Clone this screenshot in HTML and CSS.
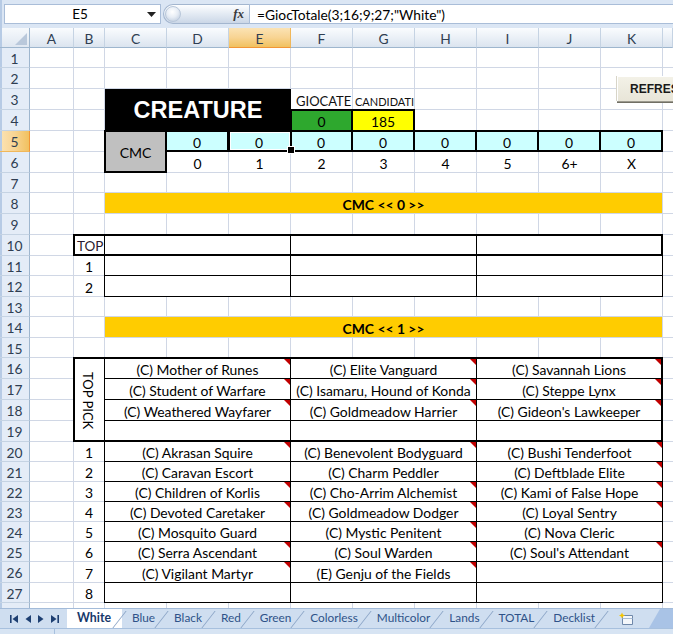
FILE: index.html
```html
<!DOCTYPE html>
<html lang="it">
<head>
<meta charset="utf-8">
<title>CREATURE - White</title>
<link rel="stylesheet" href="styles.css">
</head>
<body>
<div class="app">
  <div class="formula-bar">
    <div class="namebox">
      <span class="name">E5</span>
      <svg class="dd" width="9" height="5" viewBox="0 0 9 5"><path d="M0 0H9L4.5 5Z" fill="#222"/></svg>
    </div>
    <div class="fx-pill"><span class="knob"></span><span class="fx">fx</span></div>
    <div class="formula">=GiocTotale(3;16;9;27;"White")</div>
  </div>

  <div class="sheet">
    <div class="corner"><svg width="12" height="12" viewBox="0 0 12 12"><path d="M12 0V12H0Z" fill="#b9c8db"/></svg></div>
    <div class="ch colA">A</div>
    <div class="ch colB">B</div>
    <div class="ch colC">C</div>
    <div class="ch colD">D</div>
    <div class="ch colE sel">E</div>
    <div class="ch colF">F</div>
    <div class="ch colG">G</div>
    <div class="ch colH">H</div>
    <div class="ch colI">I</div>
    <div class="ch colJ">J</div>
    <div class="ch colK">K</div>
    <div class="ch colL"></div>

    <div class="rh row1">1</div>
    <div class="rh row2">2</div>
    <div class="rh row3">3</div>
    <div class="rh row4">4</div>
    <div class="rh row5 sel">5</div>
    <div class="rh row6">6</div>
    <div class="rh row7">7</div>
    <div class="rh row8">8</div>
    <div class="rh row9">9</div>
    <div class="rh row10">10</div>
    <div class="rh row11">11</div>
    <div class="rh row12">12</div>
    <div class="rh row13">13</div>
    <div class="rh row14">14</div>
    <div class="rh row15">15</div>
    <div class="rh row16">16</div>
    <div class="rh row17">17</div>
    <div class="rh row18">18</div>
    <div class="rh row19">19</div>
    <div class="rh row20">20</div>
    <div class="rh row21">21</div>
    <div class="rh row22">22</div>
    <div class="rh row23">23</div>
    <div class="rh row24">24</div>
    <div class="rh row25">25</div>
    <div class="rh row26">26</div>
    <div class="rh row27">27</div>
    <div class="rh row28">28</div>

    <div class="vline colA"></div>
    <div class="vline colB"></div>
    <div class="vline colC"></div>
    <div class="vline colD"></div>
    <div class="vline colE"></div>
    <div class="vline colF"></div>
    <div class="vline colG"></div>
    <div class="vline colH"></div>
    <div class="vline colI"></div>
    <div class="vline colJ"></div>
    <div class="vline colK"></div>

    <div class="hline row1"></div>
    <div class="hline row2"></div>
    <div class="hline row3"></div>
    <div class="hline row4"></div>
    <div class="hline row5"></div>
    <div class="hline row6"></div>
    <div class="hline row7"></div>
    <div class="hline row8"></div>
    <div class="hline row9"></div>
    <div class="hline row10"></div>
    <div class="hline row11"></div>
    <div class="hline row12"></div>
    <div class="hline row13"></div>
    <div class="hline row14"></div>
    <div class="hline row15"></div>
    <div class="hline row16"></div>
    <div class="hline row17"></div>
    <div class="hline row18"></div>
    <div class="hline row19"></div>
    <div class="hline row20"></div>
    <div class="hline row21"></div>
    <div class="hline row22"></div>
    <div class="hline row23"></div>
    <div class="hline row24"></div>
    <div class="hline row25"></div>
    <div class="hline row26"></div>
    <div class="hline row27"></div>
    <div class="hline row28"></div>

    <!-- header block -->
    <div class="cell creature colC row3 span3 rspan2">CREATURE</div>
    <div class="cell plain left label colF row3">GIOCATE</div>
    <div class="cell plain left label small colG row3">CANDIDATI</div>
    <div class="cell green colF row4 bt2 bl2 br2">0</div>
    <div class="cell yellow colG row4 bt2 br2">185</div>

    <div class="cell gray colC row5 rspan2 bl2 bt2 bb2 br2">CMC</div>
    <div class="cell cyan colD row5 bt2 bb2 br2">0</div>
    <div class="cell cyan colE row5 bt2 bb2 br2">0</div>
    <div class="cell cyan colF row5 bt2 bb2 br2">0</div>
    <div class="cell cyan colG row5 bt2 bb2 br2">0</div>
    <div class="cell cyan colH row5 bt2 bb2 br2">0</div>
    <div class="cell cyan colI row5 bt2 bb2 br2">0</div>
    <div class="cell cyan colJ row5 bt2 bb2 br2">0</div>
    <div class="cell cyan colK row5 bt2 bb2 br2">0</div>
    <div class="selection colE row5"></div>

    <div class="cell plain colD row6">0</div>
    <div class="cell plain colE row6">1</div>
    <div class="cell plain colF row6">2</div>
    <div class="cell plain colG row6">3</div>
    <div class="cell plain colH row6">4</div>
    <div class="cell plain colI row6">5</div>
    <div class="cell plain colJ row6">6+</div>
    <div class="cell plain colK row6">X</div>

    <!-- CMC 0 -->
    <div class="cell band colC row8 span9">CMC &lt;&lt; 0 &gt;&gt;</div>

    <div class="cell left top-label colB row10 bl2 bt2 bb2 br1">TOP</div>
    <div class="cell colC row10 span3 bt2 bb2 br1"></div>
    <div class="cell colF row10 span3 bt2 bb2 br1"></div>
    <div class="cell colI row10 span3 bt2 bb2 br2"></div>

    <div class="cell plain colB row11">1</div>
    <div class="cell colC row11 span3 bl1 br1 bb1"></div>
    <div class="cell colF row11 span3 br1 bb1"></div>
    <div class="cell colI row11 span3 br1 bb1"></div>

    <div class="cell plain colB row12">2</div>
    <div class="cell colC row12 span3 bl1 br1 bb1"></div>
    <div class="cell colF row12 span3 br1 bb1"></div>
    <div class="cell colI row12 span3 br1 bb1"></div>

    <!-- CMC 1 -->
    <div class="cell band colC row14 span9">CMC &lt;&lt; 1 &gt;&gt;</div>

    <div class="cell toppick colB row16 rspan4 bl2 bt2 bb2 br1"><span>TOP PICK</span></div>

    <div class="cell note colC row16 span3 bt2 br1 bb1">(C) Mother of Runes</div>
    <div class="cell note colF row16 span3 bt2 br1 bb1">(C) Elite Vanguard</div>
    <div class="cell note colI row16 span3 bt2 br2 bb1">(C) Savannah Lions</div>

    <div class="cell note colC row17 span3 br1 bb1">(C) Student of Warfare</div>
    <div class="cell note colF row17 span3 br1 bb1">(C) Isamaru, Hound of Konda</div>
    <div class="cell note colI row17 span3 br2 bb1">(C) Steppe Lynx</div>

    <div class="cell note colC row18 span3 br1 bb1">(C) Weathered Wayfarer</div>
    <div class="cell note colF row18 span3 br1 bb1">(C) Goldmeadow Harrier</div>
    <div class="cell note colI row18 span3 br2 bb1">(C) Gideon's Lawkeeper</div>

    <div class="cell colC row19 span3 br1 bb2"></div>
    <div class="cell colF row19 span3 br1 bb2"></div>
    <div class="cell colI row19 span3 br2 bb2"></div>

    <div class="cell plain colB row20">1</div>
    <div class="cell note colC row20 span3 bl1 br1 bb1">(C) Akrasan Squire</div>
    <div class="cell note colF row20 span3 br1 bb1">(C) Benevolent Bodyguard</div>
    <div class="cell note colI row20 span3 br1 bb1">(C) Bushi Tenderfoot</div>

    <div class="cell plain colB row21">2</div>
    <div class="cell colC row21 span3 bl1 br1 bb1">(C) Caravan Escort</div>
    <div class="cell colF row21 span3 br1 bb1">(C) Charm Peddler</div>
    <div class="cell note colI row21 span3 br1 bb1">(C) Deftblade Elite</div>

    <div class="cell plain colB row22">3</div>
    <div class="cell note colC row22 span3 bl1 br1 bb1">(C) Children of Korlis</div>
    <div class="cell note colF row22 span3 br1 bb1">(C) Cho-Arrim Alchemist</div>
    <div class="cell note colI row22 span3 br1 bb1">(C) Kami of False Hope</div>

    <div class="cell plain colB row23">4</div>
    <div class="cell note colC row23 span3 bl1 br1 bb1">(C) Devoted Caretaker</div>
    <div class="cell note colF row23 span3 br1 bb1">(C) Goldmeadow Dodger</div>
    <div class="cell note colI row23 span3 br1 bb1">(C) Loyal Sentry</div>

    <div class="cell plain colB row24">5</div>
    <div class="cell colC row24 span3 bl1 br1 bb1">(C) Mosquito Guard</div>
    <div class="cell note colF row24 span3 br1 bb1">(C) Mystic Penitent</div>
    <div class="cell colI row24 span3 br1 bb1">(C) Nova Cleric</div>

    <div class="cell plain colB row25">6</div>
    <div class="cell note colC row25 span3 bl1 br1 bb1">(C) Serra Ascendant</div>
    <div class="cell note colF row25 span3 br1 bb1">(C) Soul Warden</div>
    <div class="cell note colI row25 span3 br1 bb1">(C) Soul's Attendant</div>

    <div class="cell plain colB row26">7</div>
    <div class="cell note colC row26 span3 bl1 br1 bb1">(C) Vigilant Martyr</div>
    <div class="cell note colF row26 span3 br1 bb1">(E) Genju of the Fields</div>
    <div class="cell colI row26 span3 br1 bb1"></div>

    <div class="cell plain colB row27">8</div>
    <div class="cell colC row27 span3 bl1 br1 bb1"></div>
    <div class="cell colF row27 span3 br1 bb1"></div>
    <div class="cell colI row27 span3 br1 bb1"></div>

    <button class="refresh">REFRESH</button>
  </div>

  <div class="tabbar">
    <div class="nav">
      <svg width="8" height="8" viewBox="0 0 8 8"><path d="M0 0H1.6V8H0Z M8 0V8L2.5 4Z" fill="#1d3f72"/></svg>
      <svg width="6" height="8" viewBox="0 0 6 8"><path d="M6 0V8L0.5 4Z" fill="#1d3f72"/></svg>
      <svg width="6" height="8" viewBox="0 0 6 8"><path d="M0 0V8L5.5 4Z" fill="#1d3f72"/></svg>
      <svg width="8" height="8" viewBox="0 0 8 8"><path d="M0 0V8L5.5 4Z M6.4 0H8V8H6.4Z" fill="#1d3f72"/></svg>
    </div>
    <div class="tabs">
      <div class="tab active">White</div>
      <div class="tab">Blue</div>
      <div class="tab">Black</div>
      <div class="tab">Red</div>
      <div class="tab">Green</div>
      <div class="tab">Colorless</div>
      <div class="tab">Multicolor</div>
      <div class="tab">Lands</div>
      <div class="tab">TOTAL</div>
      <div class="tab">Decklist</div>
      <div class="tab new">
        <svg width="17" height="14" viewBox="0 0 17 14">
          <path d="M4.5 3.5H14.5V12.5H4.5Z" fill="#f4f7fb" stroke="#6f88aa"/>
          <path d="M4.5 6.5H14.5" stroke="#a9bcd6"/>
          <path d="M4 0.5L4.9 2.6L7 3.5L4.9 4.4L4 6.5L3.1 4.4L1 3.5L3.1 2.6Z" fill="#f5c400"/>
        </svg>
      </div>
    </div>
    <div class="tab-fill"></div>
  </div>
  <div class="statusbar"><div class="status-cell"></div></div>
</div>
</body>
</html>
```

FILE: styles.css
```css
* { box-sizing: border-box; }
html, body { margin: 0; padding: 0; }
body {
  width: 673px;
  height: 634px;
  overflow: hidden;
  background: #fff;
  font-family: Lato, "Liberation Sans", sans-serif;
  color: #000;
}
.app {
  width: 673px;
  height: 634px;
  display: flex;
  flex-direction: column;
  overflow: hidden;
}

/* ---------- formula bar ---------- */
.formula-bar {
  height: 28px;
  flex: none;
  display: flex;
  align-items: flex-start;
  padding: 4px 0 0 4px;
  background: #dbe6f4;
  box-shadow: inset 2px 0 #b7cbe5;
}
.namebox {
  width: 157px;
  height: 20px;
  background: #fff;
  border: 1px solid #a9bdd8;
  display: flex;
  align-items: center;
}
.namebox .name {
  flex: 1;
  text-align: center;
  font-size: 13.5px;
  padding-left: 8px;
}
.namebox .dd { margin-right: 4px; }
.fx-pill {
  margin-left: 2px;
  width: 86px;
  height: 20px;
  border-radius: 10px 0 0 10px;
  background: linear-gradient(#fdfeff, #e3eaf3 50%, #cbd7e7);
  border: 1px solid #a3b6cf;
  border-right: none;
  display: flex;
  align-items: center;
  justify-content: space-between;
}
.knob {
  width: 16px;
  height: 16px;
  margin-left: 1px;
  border-radius: 50%;
  background: radial-gradient(circle at 45% 35%, #ffffff 0, #e7edf5 45%, #b5c4d8 100%);
  border: 1px solid #b8c7da;
}
.fx {
  font-family: "Liberation Serif", serif;
  font-style: italic;
  font-weight: bold;
  font-size: 13px;
  color: #3a3a3a;
  margin-right: 5px;
}
.formula {
  flex: 1;
  height: 20px;
  background: #fff;
  border: 1px solid #a9bdd8;
  border-right: none;
  padding-left: 7px;
  display: flex;
  align-items: center;
  font-size: 13.8px;
}

/* ---------- sheet grid ---------- */
.sheet {
  position: relative;
  height: 580px;
  flex: none;
  overflow: hidden;
  display: grid;
  grid-template-columns: 30px 44px 31px 62px repeat(8, 62px) 10px;
  grid-template-rows:
    20px
    20px 21px 21px 21px 21px 21px 20px 21px 21px
    21px 20px 21px 20px 21px 20px
    21px 21px 21px 21px
    20px 20px 20px 20px 20px 20px 21px
    20px 20px;
}

.colA { grid-column-start: 2; }
.colB { grid-column-start: 3; }
.colC { grid-column-start: 4; }
.colD { grid-column-start: 5; }
.colE { grid-column-start: 6; }
.colF { grid-column-start: 7; }
.colG { grid-column-start: 8; }
.colH { grid-column-start: 9; }
.colI { grid-column-start: 10; }
.colJ { grid-column-start: 11; }
.colK { grid-column-start: 12; }
.colL { grid-column-start: 13; }

.row1 { grid-row-start: 2; }
.row2 { grid-row-start: 3; }
.row3 { grid-row-start: 4; }
.row4 { grid-row-start: 5; }
.row5 { grid-row-start: 6; }
.row6 { grid-row-start: 7; }
.row7 { grid-row-start: 8; }
.row8 { grid-row-start: 9; }
.row9 { grid-row-start: 10; }
.row10 { grid-row-start: 11; }
.row11 { grid-row-start: 12; }
.row12 { grid-row-start: 13; }
.row13 { grid-row-start: 14; }
.row14 { grid-row-start: 15; }
.row15 { grid-row-start: 16; }
.row16 { grid-row-start: 17; }
.row17 { grid-row-start: 18; }
.row18 { grid-row-start: 19; }
.row19 { grid-row-start: 20; }
.row20 { grid-row-start: 21; }
.row21 { grid-row-start: 22; }
.row22 { grid-row-start: 23; }
.row23 { grid-row-start: 24; }
.row24 { grid-row-start: 25; }
.row25 { grid-row-start: 26; }
.row26 { grid-row-start: 27; }
.row27 { grid-row-start: 28; }
.row28 { grid-row-start: 29; }

.span3 { grid-column-end: span 3; }
.span9 { grid-column-end: span 9; }
.rspan2 { grid-row-end: span 2; }
.rspan4 { grid-row-end: span 4; }

/* headers */
.corner {
  grid-row: 1;
  grid-column: 1;
  background: linear-gradient(#f6f9fc, #dfe7f1);
  border-right: 1px solid #9eb6ce;
  border-bottom: 1px solid #9eb6ce;
  display: flex;
  align-items: flex-end;
  justify-content: flex-end;
  padding: 0 2px 2px 0;
  box-shadow: inset 2px 0 #b7cbe5;
}
.ch {
  grid-row: 1;
  background: linear-gradient(#fafcfe, #e9eff6 55%, #dbe4ef);
  border-right: 1px solid #c5d3e3;
  border-bottom: 1px solid #9eb6ce;
  display: flex;
  align-items: center;
  justify-content: center;
  font-size: 13.8px;
  color: #2f3e52;
  padding-top: 1px;
}
.ch.sel {
  background: linear-gradient(#fbe3b4, #f8d493 50%, #f1c15f);
  border-bottom-color: #f29536;
  border-right-color: #f0b75a;
}
.rh {
  grid-column: 1;
  background: #e4ecf7;
  border-right: 1px solid #9eb6ce;
  border-bottom: 1px solid #c5d3e3;
  box-shadow: inset 2px 0 #b7cbe5;
  display: flex;
  align-items: center;
  justify-content: center;
  font-size: 13.8px;
  color: #2f3e52;
  padding-top: 1px;
}
.rh.sel {
  background: linear-gradient(90deg, #fbe3b4, #f8d493 50%, #f1c15f);
  border-bottom-color: #f0b75a;
  border-right-color: #f29536;
}

/* gridlines */
.vline {
  grid-row: 2 / -1;
  border-right: 1px solid #d0d7e5;
}
.hline {
  grid-column: 2 / -1;
  border-bottom: 1px solid #d0d7e5;
}

/* cells */
.cell {
  position: relative;
  margin: 0 1px 1px 0;
  background: #fff;
  display: flex;
  align-items: center;
  justify-content: center;
  white-space: nowrap;
  overflow: hidden;
  font-size: 13.9px;
  padding-top: 2px;
}
.plain { background: transparent; }
.left { justify-content: flex-start; padding-left: 4px; }

.bl1 { border-left: 1px solid #000; margin-left: -1px; }
.bl2 { border-left: 2px solid #000; margin-left: -1px; }
.bt1 { border-top: 1px solid #000; margin-top: -1px; }
.bt2 { border-top: 2px solid #000; margin-top: -1px; }
.br1 { border-right: 1px solid #000; margin-right: 0; }
.br2 { border-right: 2px solid #000; margin-right: 0; }
.bb1 { border-bottom: 1px solid #000; margin-bottom: 0; }
.bb2 { border-bottom: 2px solid #000; margin-bottom: 0; }

.creature {
  margin: 0;
  background: #000;
  color: #fff;
  font-family: "Liberation Sans", Arial, sans-serif;
  font-weight: bold;
  font-size: 23.5px;
  padding-top: 0;
}
.label { font-size: 13px; padding-left: 5px; padding-top: 4px; color: #111; }
.label.small { font-size: 11px; padding-left: 2px; overflow: visible; }
.green { background: #2ea82e; }
.yellow { background: #ffff00; }
.gray { background: #c0c0c0; font-size: 14px; }
.cyan { background: #ccffff; }
.band { background: #ffcc00; font-weight: bold; }
.top-label { font-size: 13.5px; padding-left: 2px; color: #2a1a2e; }
.toppick span {
  writing-mode: vertical-rl;
  font-size: 13px;
  margin-right: 3px;
}

.note::after {
  content: "";
  position: absolute;
  top: 0;
  right: 0;
  border-style: solid;
  border-width: 0 6px 6px 0;
  border-color: transparent #c00000 transparent transparent;
}

.selection {
  margin: -1px -1px 0 -1px;
  border: 2px solid #000;
  box-shadow: inset 0 0 0 1px #fff;
  position: relative;
}
.selection::after {
  content: "";
  position: absolute;
  right: -5px;
  bottom: -4px;
  width: 6px;
  height: 6px;
  background: #000;
  border: 1px solid #fff;
}

.refresh {
  position: absolute;
  left: 617px;
  top: 48px;
  width: 72px;
  height: 25px;
  padding: 0 0 0 12px;
  margin: 0;
  text-align: left;
  background: linear-gradient(#f3f1e7, #e8e5d8);
  border: none;
  border-top: 1px solid #fff;
  border-left: 1px solid #fff;
  box-shadow: 0 1px 0 #9c9a8f, 0 2px 0 #716f64, -1px 0 0 #d8d5c8;
  font-family: "Liberation Sans", Arial, sans-serif;
  font-weight: bold;
  font-size: 12px;
  color: #1a1a1a;
  white-space: nowrap;
  overflow: hidden;
}

/* ---------- sheet tabs ---------- */
.tabbar {
  height: 20px;
  flex: none;
  display: flex;
  align-items: stretch;
  background: #cfdef0;
  border-top: 1px solid #a3bbd9;
}
.nav {
  width: 67px;
  flex: none;
  display: flex;
  align-items: center;
  gap: 7px;
  padding-left: 10px;
}
.tabs { display: flex; }
.tab {
  position: relative;
  display: flex;
  align-items: center;
  padding: 0 9px 2px 10px;
  font-size: 11.8px;
  color: #2e5288;
}
.tab.active {
  background: #fff;
  font-weight: bold;
  color: #17396b;
  padding: 0 11px 2px 10px;
  font-size: 12.3px;
}
.tab + .tab::before {
  content: "";
  position: absolute;
  left: -3px;
  top: 2px;
  bottom: 0;
  width: 1px;
  background: #8aa4c6;
  transform: skewX(-38deg);
}
.tab.new { padding: 0 6px 0 14px; }
.tab-fill {
  flex: 1;
  margin: 0 0 0 8px;
  background: #a9c3e6;
  transform: skewX(-30deg);
  transform-origin: bottom left;
}
.statusbar {
  flex: 1;
  background: #d7e4f3;
  border-top: 1px solid #a7c0de;
  display: flex;
}
.status-cell {
  width: 55px;
  border-right: 1px solid #a7c0de;
}
```
